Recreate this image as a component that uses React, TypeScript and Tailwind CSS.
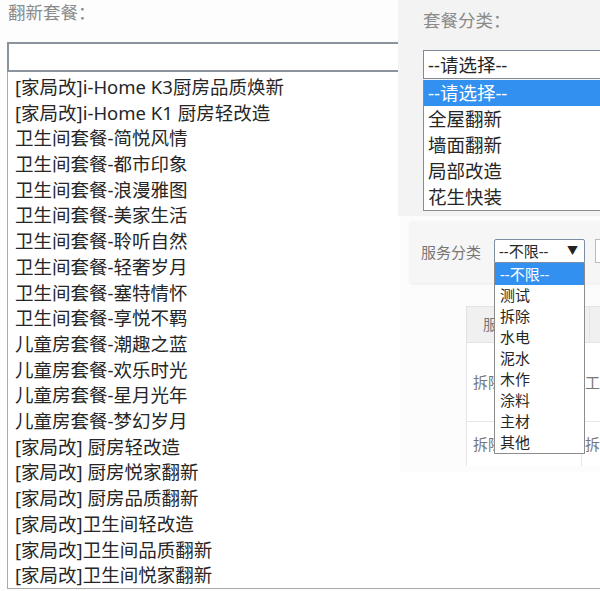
const packages = [
  "[家局改]i-Home K3厨房品质焕新",
  "[家局改]i-Home K1 厨房轻改造",
  "卫生间套餐-简悦风情",
  "卫生间套餐-都市印象",
  "卫生间套餐-浪漫雅图",
  "卫生间套餐-美家生活",
  "卫生间套餐-聆听自然",
  "卫生间套餐-轻奢岁月",
  "卫生间套餐-塞特情怀",
  "卫生间套餐-享悦不羁",
  "儿童房套餐-潮趣之蓝",
  "儿童房套餐-欢乐时光",
  "儿童房套餐-星月光年",
  "儿童房套餐-梦幻岁月",
  "[家局改] 厨房轻改造",
  "[家局改] 厨房悦家翻新",
  "[家局改] 厨房品质翻新",
  "[家局改]卫生间轻改造",
  "[家局改]卫生间品质翻新",
  "[家局改]卫生间悦家翻新",
];

const categories = ["全屋翻新", "墙面翻新", "局部改造", "花生快装"];

const services = ["测试", "拆除", "水电", "泥水", "木作", "涂料", "主材", "其他"];

function PackageSelect() {
  return (
    <div className="flex flex-col pl-[7px] h-full">
      <div className="h-[24px] leading-[24px] pl-[1px] text-[17.5px] text-[#8a8a8a]">
        翻新套餐：
      </div>
      <div className="mt-[18px] h-[30px] border-2 border-r-0 border-[#8b949c] bg-white" />
      <ul className="flex-1 pt-[2px] pl-[7px] border-l border-b border-[#a9a9a9] bg-white text-[18.5px] leading-[25.7px] text-[#262626]">
        {packages.map((p) => (
          <li key={p} className="whitespace-nowrap">
            {p}
          </li>
        ))}
      </ul>
    </div>
  );
}

function CategoryPanel() {
  return (
    <div className="absolute left-[398px] top-0 w-[202px] h-[216px] bg-[#f3f3f3] pl-[25px] pt-[8px]">
      <div className="h-[24px] leading-[24px] text-[17.5px] text-[#8a8a8a]">套餐分类：</div>
      <div className="mt-[18px] h-[29px] border border-r-0 border-[#7f8b99] bg-white pl-[4px] leading-[27px] text-[18.5px] text-[#262626]">
        --请选择--
      </div>
      <ul className="border border-t-0 border-r-0 border-[#8c8c8c] bg-white text-[18.5px] leading-[26px] text-[#262626]">
        <li className="bg-[#3290f0] text-white pl-[4px] mt-[1px]">--请选择--</li>
        {categories.map((c) => (
          <li key={c} className="pl-[4px]">
            {c}
          </li>
        ))}
      </ul>
    </div>
  );
}

function ServicePanel() {
  return (
    <div className="absolute left-[400px] top-[216px] w-[200px] h-[256px] bg-[#fcfcfc]">
      <div className="absolute left-[10px] top-[5px] right-0 h-[62px] rounded-l-[3px] bg-[#f6f6f6] shadow-[0_1px_3px_rgba(0,0,0,0.08)]" />

      {/* table behind the dropdown */}
      <div className="absolute left-[66px] top-[90px] right-0 text-[15px] text-[#777]">
        <div className="flex h-[37px] bg-[#f0f0f0] border border-r-0 border-[#e3e3e3]">
          <div className="w-[123px] border-r border-[#e3e3e3] pl-[16px] leading-[35px]">服务</div>
          <div className="flex-1" />
        </div>
        <div className="flex h-[79px] border-l border-b border-[#e6e6e6] bg-white">
          <div className="w-[123px] border-r border-[#e6e6e6] pl-[6px] leading-[79px]">拆除</div>
          <div className="flex-1 pl-[3px] leading-[79px]">工</div>
        </div>
        <div className="flex h-[44px] border-l border-[#e6e6e6] bg-white">
          <div className="w-[123px] border-r border-[#e6e6e6] pl-[6px] leading-[44px]">拆除</div>
          <div className="flex-1 pl-[3px] leading-[44px]">拆</div>
        </div>
      </div>

      <div className="absolute left-[21px] top-[25px] h-[22px] leading-[22px] text-[15px] text-[#777]">服务分类</div>

      <div className="absolute left-[94px] top-[23px] w-[91px]">
        <div className="flex items-center justify-between h-[24px] border border-[#7d8ea3] rounded-t-[2px] bg-white pl-[4px] pr-[6px] text-[15px] text-[#262626]">
          <span>--不限--</span>
          <span className="text-[11px] text-[#222]">▼</span>
        </div>
        <ul className="border border-t-0 border-[#8c8c8c] bg-white text-[15px] text-[#262626]">
          <li className="h-[22px] leading-[22px] bg-[#3290f0] text-white pl-[5px]">--不限--</li>
          {services.map((s) => (
            <li key={s} className="h-[21px] leading-[21px] pl-[5px]">
              {s}
            </li>
          ))}
        </ul>
      </div>

      <div className="absolute left-[195px] top-[23px] w-[10px] h-[24px] border border-r-0 border-[#bbb] bg-white" />
    </div>
  );
}

export default function App() {
  return (
    <div className="relative w-[600px] h-[591px] overflow-hidden bg-[#fdfdfd] font-['Noto_Sans','Noto_Sans_CJK_SC',sans-serif]">
      <div className="h-[589px]">
        <PackageSelect />
      </div>
      <CategoryPanel />
      <ServicePanel />
    </div>
  );
}
